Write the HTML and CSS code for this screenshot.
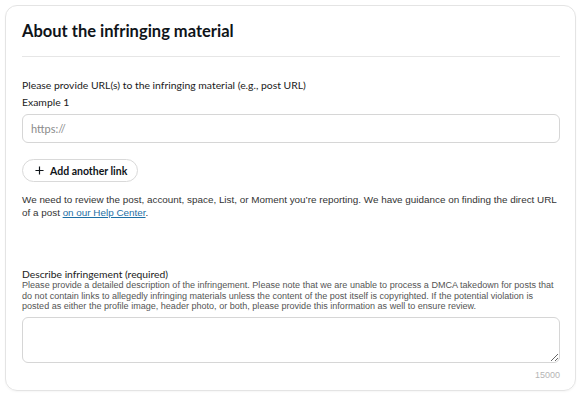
FILE: index.html
```html
<!DOCTYPE html>
<html lang="en">
<head>
<meta charset="utf-8">
<title>About the infringing material</title>
<link rel="stylesheet" href="styles.css">
</head>
<body>
<section class="card">
  <h2 class="title">About the infringing material</h2>
  <hr class="divider">
  <div class="field">
    <div class="label">Please provide URL(s) to the infringing material (e.g., post URL)</div>
    <div class="label">Example 1</div>
    <input class="url-input" type="text" placeholder="https://">
  </div>
  <button class="add-btn" type="button">
    <svg class="plus" viewBox="0 0 10 10" width="9" height="9" aria-hidden="true"><path d="M5 0.5v9M0.5 5h9" stroke="#0f1419" stroke-width="1.3" fill="none"/></svg>
    <span>Add another link</span>
  </button>
  <p class="help">We need to review the post, account, space, List, or Moment you’re reporting. We have guidance on finding the direct URL of a post <a href="#">on our Help Center</a>.</p>
  <div class="describe">
    <div class="dlabel">Describe infringement (required)</div>
    <p class="ddesc">Please provide a detailed description of the infringement. Please note that we are unable to process a DMCA takedown for posts that do not contain links to allegedly infringing materials unless the content of the post itself is copyrighted. If the potential violation is posted as either the profile image, header photo, or both, please provide this information as well to ensure review.</p>
    <textarea class="area"></textarea>
    <div class="count">15000</div>
  </div>
</section>
</body>
</html>
```

FILE: styles.css
```css
html, body {
  margin: 0;
  padding: 0;
  background: #ffffff;
}
body {
  padding: 5px 6px 7px 5px;
  font-family: Lato, "Liberation Sans", sans-serif;
  color: #0f1419;
}
.card {
  border: 1px solid #e4e4e4;
  border-radius: 12px;
  padding: 15px 15px 9px 16px;
  display: flex;
  flex-direction: column;
  box-shadow: 0 1px 2px rgba(0,0,0,0.04);
}
.title {
  margin: 0;
  font-size: 16.5px;
  line-height: 20px;
  font-weight: 700;
  color: #0f1419;
}
.divider {
  margin: 15px 0 0 0;
  border: 0;
  border-top: 1px solid #e6e6e6;
  height: 0;
}
.field {
  margin-top: 20px;
  display: flex;
  flex-direction: column;
}
.label {
  font-size: 10.4px;
  line-height: 17px;
  color: #1a1a1a;
}
.url-input {
  margin-top: 3px;
  height: 29px;
  box-sizing: border-box;
  border: 1px solid #d6d6d6;
  border-radius: 6px;
  padding: 0 8px;
  font-family: Lato, sans-serif;
  font-size: 11px;
  color: #333;
  outline: none;
}
.url-input::placeholder {
  color: #8a8a8a;
}
.add-btn {
  margin-top: 16px;
  align-self: flex-start;
  width: 116px;
  height: 23px;
  box-sizing: border-box;
  border: 1px solid #d9d9d9;
  border-radius: 12px;
  background: #fff;
  display: flex;
  align-items: center;
  justify-content: flex-start;
  gap: 6px;
  padding: 0 0 0 12px;
  font-family: Lato, sans-serif;
  font-size: 10.5px;
  font-weight: 700;
  color: #0f1419;
}
.plus {
  display: block;
}
.help {
  margin: 11px 0 0 0;
  font-family: "Liberation Sans", Arial, sans-serif;
  font-size: 9.9px;
  line-height: 13px;
  color: #333;
}
.help a {
  color: #1d6fa5;
  text-decoration: underline;
}
.describe {
  margin-top: 49px;
  display: flex;
  flex-direction: column;
}
.dlabel {
  font-size: 10.3px;
  line-height: 12px;
  color: #1a1a1a;
}
.ddesc {
  margin: 0;
  font-family: "Liberation Sans", Arial, sans-serif;
  font-size: 9.05px;
  line-height: 10.5px;
  color: #555;
}
.area {
  margin-top: 5px;
  height: 46px;
  box-sizing: border-box;
  border: 1px solid #d6d6d6;
  border-radius: 6px;
  resize: vertical;
  font-family: Lato, sans-serif;
  outline: none;
}
.count {
  margin-top: 6px;
  align-self: flex-end;
  font-family: "Liberation Sans", Arial, sans-serif;
  font-size: 9px;
  line-height: 12px;
  color: #b5b5b5;
}
```
